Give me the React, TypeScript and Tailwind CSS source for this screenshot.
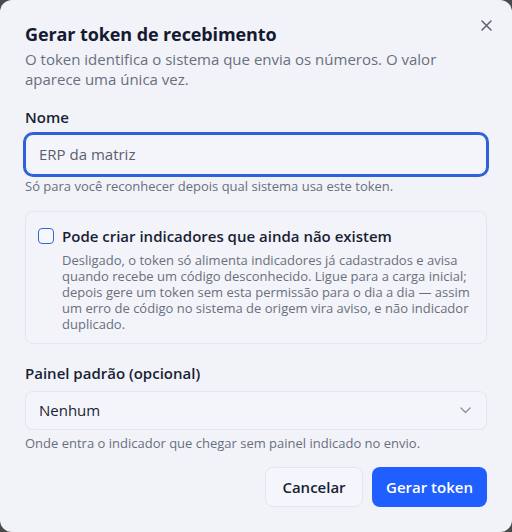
import React from "react";

export default function App() {
  return (
    <div className="w-[512px] h-[532px] bg-[#4a4a4a]" style={{ fontFamily: '"Open Sans", "Noto Sans", sans-serif' }}>
      <div className="relative w-full h-full rounded-[12px] bg-[#f1f3f9] px-[25px] pt-[20px] flex flex-col">
        <button className="absolute right-[19px] top-[18px] w-[14px] h-[14px] flex items-center justify-center text-[#5c6070]">
          <svg width="11" height="11" viewBox="0 0 11 11" fill="none" stroke="currentColor" strokeWidth="1.5" strokeLinecap="round">
            <path d="M1 1L10 10M10 1L1 10" />
          </svg>
        </button>
        <h2 className="text-[18px] leading-[28px] font-bold text-[#151a30] tracking-[-0.1px]">Gerar token de recebimento</h2>
        <p className="mt-[1px] text-[15px] leading-[20px] text-[#6a6f7e] pr-[50px]">
          O token identifica o sistema que envia os números. O valor aparece uma única vez.
        </p>

        <label className="mt-[18px] text-[15px] leading-[20px] font-semibold text-[#1a1f35]">Nome</label>
        <div className="mt-[7px] h-[41px] rounded-[8px] border border-[#2f62d8] ring-2 ring-[#2f62d8] bg-[#f3f5fa] flex items-center px-[13px] text-[15px] text-[#5a5f70]">
          ERP da matriz
        </div>
        <p className="mt-[3px] text-[13px] leading-[16px] text-[#6a6f7e]">Só para você reconhecer depois qual sistema usa este token.</p>

        <div className="mt-[17px] rounded-[8px] border border-[#e3e6ee] bg-[#f2f4f9] pl-[12px] pr-[12px] pt-[13px] pb-[11px] flex gap-[8px]">
          <div className="pt-[3px]">
            <div className="w-[16px] h-[16px] rounded-[4px] border-[1.5px] border-[#3566d6] bg-[#f5f7fc]" />
          </div>
          <div className="flex-1">
            <div className="text-[15px] leading-[22px] font-semibold text-[#1a1f35]">Pode criar indicadores que ainda não existem</div>
            <p className="mt-[5px] text-[13px] leading-[16px] text-[#6a6f7e]">
              Desligado, o token só alimenta indicadores já cadastrados e avisa quando recebe um código desconhecido. Ligue para a carga inicial; depois gere um token sem esta permissão para o dia a dia — assim um erro de código no sistema de origem vira aviso, e não indicador duplicado.
            </p>
          </div>
        </div>

        <label className="mt-[19px] text-[15px] leading-[20px] font-semibold text-[#1a1f35]">Painel padrão (opcional)</label>
        <div className="mt-[8px] h-[39px] rounded-[8px] border border-[#e3e6ee] bg-[#f3f5fa] flex items-center justify-between pl-[13px] pr-[15px]">
          <span className="text-[15px] text-[#1a1f35]">Nenhum</span>
          <svg width="11" height="7" viewBox="0 0 11 7" fill="none" stroke="#8a8f9c" strokeWidth="1.3" strokeLinecap="round" strokeLinejoin="round">
            <path d="M1 1L5.5 5.5L10 1" />
          </svg>
        </div>
        <p className="mt-[5px] text-[13px] leading-[16px] text-[#6a6f7e]">Onde entra o indicador que chegar sem painel indicado no envio.</p>

        <div className="mt-[16px] flex justify-end gap-[9px]">
          <button className="h-[40px] w-[98px] rounded-[8px] border border-[#e3e6ee] bg-[#f4f6fb] text-[15px] font-semibold text-[#1a1f35]">Cancelar</button>
          <button className="h-[40px] w-[115px] rounded-[8px] bg-[#1f5eff] text-[15px] font-semibold text-white">Gerar token</button>
        </div>
      </div>
    </div>
  );
}
